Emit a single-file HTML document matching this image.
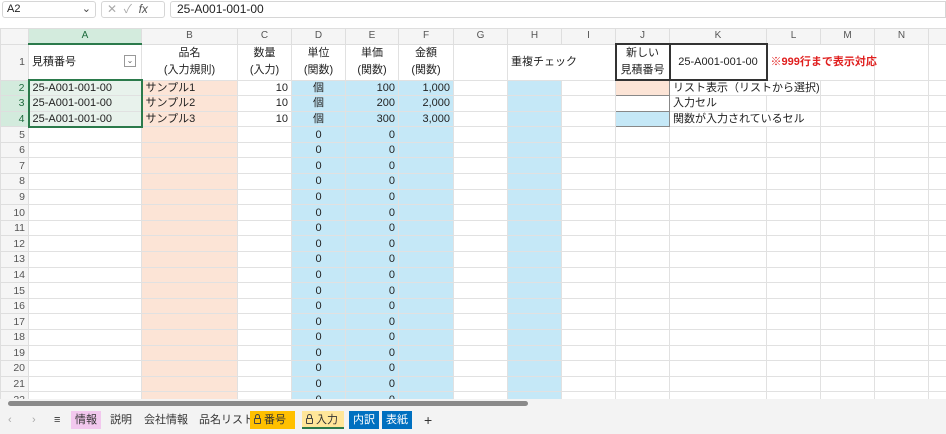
<!DOCTYPE html>
<html><head><meta charset="utf-8"><style>
*{box-sizing:border-box;margin:0;padding:0}
body{width:946px;height:434px;overflow:hidden;background:#fff;font-family:"Liberation Sans","Noto Sans CJK JP",sans-serif;font-size:11px;color:#222;position:relative}
.fb{position:absolute;top:0;left:0;width:946px;height:22px;background:#fff}
.nb{position:absolute;left:2px;top:1px;width:94px;height:17px;border:1px solid #d6d6d6;border-radius:3px;padding-left:4px;line-height:15px}
.fx{position:absolute;left:101px;top:1px;width:64px;height:17px;border:1px solid #d6d6d6;border-radius:3px;color:#aaa;line-height:15px;padding-left:5px;font-size:12px}
.fm{position:absolute;left:170px;top:1px;width:776px;height:17px;border:1px solid #d6d6d6;border-radius:3px 0 0 3px;line-height:15px;padding-left:6px;font-size:12px}
table{position:absolute;left:0;top:28px;border-collapse:collapse;table-layout:fixed;width:946px}
td{border:1px solid #e1e1e1;height:15.6px;padding:0 3px;white-space:nowrap;overflow:visible;line-height:14px}
tr.h td{height:15px;background:#f5f5f5;color:#555;text-align:center;font-size:10px;border-color:#dedede}
td.rh{background:#f5f5f5;color:#555;text-align:right;padding-right:3px;font-size:10.5px;border-color:#dedede}
.sel{background:#d3ebdd!important;color:#1e6b3d!important}
.p{background:#fce4d6}.b{background:#c5e8f7}
.r{text-align:right}.c{text-align:center}
.ov{position:relative;display:inline-block;white-space:nowrap}
.tabs{position:absolute;left:0;top:408px;width:946px;height:26px;background:#f3f3f3}
.tab{position:absolute;top:3px;height:18px;line-height:18px;padding:0 4px;font-size:11px;color:#333}
.sb{position:absolute;left:0;top:399px;width:946px;height:9px;background:#f3f3f3}
.lk{display:inline-block;width:7px;height:6px;border:1px solid #444;border-radius:1px;position:relative;margin-right:3px;vertical-align:-1px}
.lk:before{content:"";position:absolute;left:0;top:-5px;width:3px;height:4px;border:1px solid #444;border-bottom:none;border-radius:3px 3px 0 0}
</style></head><body>
<div class="fb"><div class="nb">A2<span style="position:absolute;right:4px;color:#444">⌄</span></div><div class="fx">✕ &nbsp;✓ &nbsp;<i style="color:#555">fx</i></div><div class="fm">25-A001-001-00</div></div>
<table>
<colgroup><col style="width:28px"><col style="width:113px"><col style="width:96px"><col style="width:54px"><col style="width:54px"><col style="width:53px"><col style="width:55px"><col style="width:54px"><col style="width:54px"><col style="width:54px"><col style="width:54px"><col style="width:97px"><col style="width:54px"><col style="width:54px"><col style="width:54px"><col style="width:18px"></colgroup>
<tr class="h"><td style="background:#f5f5f5"></td><td class="sel" style="border-bottom:2px solid #2b7a4b">A</td><td>B</td><td>C</td><td>D</td><td>E</td><td>F</td><td>G</td><td>H</td><td>I</td><td>J</td><td>K</td><td>L</td><td>M</td><td>N</td><td></td></tr>
<tr><td class="rh" style="height:34px">1</td><td>見積番号<span style="float:right;border:1px solid #999;width:12px;height:12px;font-size:8px;line-height:10px;text-align:center;color:#666;margin-right:2px">⌄</span></td><td class="c" style="line-height:17px">品名<br>(入力規則)</td><td class="c" style="line-height:17px">数量<br>(入力)</td><td class="c" style="line-height:17px">単位<br>(関数)</td><td class="c" style="line-height:17px">単価<br>(関数)</td><td class="c" style="line-height:17px">金額<br>(関数)</td><td></td><td style="border-right:none"><span class="ov">重複チェック</span></td><td style="border-left:none"></td><td class="c" style="border:2px solid #333;line-height:17px">新しい<br>見積番号</td><td class="c" style="border:2px solid #333">25-A001-001-00</td><td style="border-right:none"><span class="ov" style="color:#e0201f;font-weight:bold">※999行まで表示対応</span></td><td style="border-left:none"></td><td></td><td></td></tr>
<tr><td class="rh sel">2</td><td style="border:2px solid #2b7a4b;border-bottom:none;background:#e8f2ec">25-A001-001-00</td><td class="p">サンプル1</td><td class="r">10</td><td class="b c">個</td><td class="b r">100</td><td class="b r">1,000</td><td></td><td class="b"></td><td></td><td class="p" style="border:1px solid #888"></td><td style="border-right:none"><span class="ov">リスト表示（リストから選択)</span></td><td style="border-left:none"></td><td></td><td></td><td></td></tr>
<tr><td class="rh sel">3</td><td style="border-left:2px solid #2b7a4b;border-right:2px solid #2b7a4b;background:#e8f2ec">25-A001-001-00</td><td class="p">サンプル2</td><td class="r">10</td><td class="b c">個</td><td class="b r">200</td><td class="b r">2,000</td><td></td><td class="b"></td><td></td><td style="border:1px solid #888"></td><td>入力セル</td><td></td><td></td><td></td><td></td></tr>
<tr><td class="rh sel">4</td><td style="border:2px solid #2b7a4b;border-top:none;background:#e8f2ec">25-A001-001-00</td><td class="p">サンプル3</td><td class="r">10</td><td class="b c">個</td><td class="b r">300</td><td class="b r">3,000</td><td></td><td class="b"></td><td></td><td class="b" style="border:1px solid #888"></td><td style="border-right:none"><span class="ov">関数が入力されているセル</span></td><td style="border-left:none"></td><td></td><td></td><td></td></tr>
<tr><td class="rh">5</td><td></td><td class="p"></td><td></td><td class="b c">0</td><td class="b r">0</td><td class="b"></td><td></td><td class="b"></td><td></td><td></td><td></td><td></td><td></td><td></td><td></td></tr>
<tr><td class="rh">6</td><td></td><td class="p"></td><td></td><td class="b c">0</td><td class="b r">0</td><td class="b"></td><td></td><td class="b"></td><td></td><td></td><td></td><td></td><td></td><td></td><td></td></tr>
<tr><td class="rh">7</td><td></td><td class="p"></td><td></td><td class="b c">0</td><td class="b r">0</td><td class="b"></td><td></td><td class="b"></td><td></td><td></td><td></td><td></td><td></td><td></td><td></td></tr>
<tr><td class="rh">8</td><td></td><td class="p"></td><td></td><td class="b c">0</td><td class="b r">0</td><td class="b"></td><td></td><td class="b"></td><td></td><td></td><td></td><td></td><td></td><td></td><td></td></tr>
<tr><td class="rh">9</td><td></td><td class="p"></td><td></td><td class="b c">0</td><td class="b r">0</td><td class="b"></td><td></td><td class="b"></td><td></td><td></td><td></td><td></td><td></td><td></td><td></td></tr>
<tr><td class="rh">10</td><td></td><td class="p"></td><td></td><td class="b c">0</td><td class="b r">0</td><td class="b"></td><td></td><td class="b"></td><td></td><td></td><td></td><td></td><td></td><td></td><td></td></tr>
<tr><td class="rh">11</td><td></td><td class="p"></td><td></td><td class="b c">0</td><td class="b r">0</td><td class="b"></td><td></td><td class="b"></td><td></td><td></td><td></td><td></td><td></td><td></td><td></td></tr>
<tr><td class="rh">12</td><td></td><td class="p"></td><td></td><td class="b c">0</td><td class="b r">0</td><td class="b"></td><td></td><td class="b"></td><td></td><td></td><td></td><td></td><td></td><td></td><td></td></tr>
<tr><td class="rh">13</td><td></td><td class="p"></td><td></td><td class="b c">0</td><td class="b r">0</td><td class="b"></td><td></td><td class="b"></td><td></td><td></td><td></td><td></td><td></td><td></td><td></td></tr>
<tr><td class="rh">14</td><td></td><td class="p"></td><td></td><td class="b c">0</td><td class="b r">0</td><td class="b"></td><td></td><td class="b"></td><td></td><td></td><td></td><td></td><td></td><td></td><td></td></tr>
<tr><td class="rh">15</td><td></td><td class="p"></td><td></td><td class="b c">0</td><td class="b r">0</td><td class="b"></td><td></td><td class="b"></td><td></td><td></td><td></td><td></td><td></td><td></td><td></td></tr>
<tr><td class="rh">16</td><td></td><td class="p"></td><td></td><td class="b c">0</td><td class="b r">0</td><td class="b"></td><td></td><td class="b"></td><td></td><td></td><td></td><td></td><td></td><td></td><td></td></tr>
<tr><td class="rh">17</td><td></td><td class="p"></td><td></td><td class="b c">0</td><td class="b r">0</td><td class="b"></td><td></td><td class="b"></td><td></td><td></td><td></td><td></td><td></td><td></td><td></td></tr>
<tr><td class="rh">18</td><td></td><td class="p"></td><td></td><td class="b c">0</td><td class="b r">0</td><td class="b"></td><td></td><td class="b"></td><td></td><td></td><td></td><td></td><td></td><td></td><td></td></tr>
<tr><td class="rh">19</td><td></td><td class="p"></td><td></td><td class="b c">0</td><td class="b r">0</td><td class="b"></td><td></td><td class="b"></td><td></td><td></td><td></td><td></td><td></td><td></td><td></td></tr>
<tr><td class="rh">20</td><td></td><td class="p"></td><td></td><td class="b c">0</td><td class="b r">0</td><td class="b"></td><td></td><td class="b"></td><td></td><td></td><td></td><td></td><td></td><td></td><td></td></tr>
<tr><td class="rh">21</td><td></td><td class="p"></td><td></td><td class="b c">0</td><td class="b r">0</td><td class="b"></td><td></td><td class="b"></td><td></td><td></td><td></td><td></td><td></td><td></td><td></td></tr>
<tr><td class="rh">22</td><td></td><td class="p"></td><td></td><td class="b c">0</td><td class="b r">0</td><td class="b"></td><td></td><td class="b"></td><td></td><td></td><td></td><td></td><td></td><td></td><td></td></tr>
</table>
<div class="sb"><div style="position:absolute;left:8px;top:2px;width:520px;height:5px;border-radius:3px;background:#8a8a8a"></div></div>
<div class="tabs">
<span class="tab" style="left:4px;color:#aaa">‹</span><span class="tab" style="left:28px;color:#aaa">›</span><span class="tab" style="left:50px">≡</span>
<span class="tab" style="left:71px;background:#f2c8ee">情報</span>
<span class="tab" style="left:106px">説明</span>
<span class="tab" style="left:140px">会社情報</span>
<span class="tab" style="left:195px">品名リスト</span>
<span class="tab" style="left:250px;background:#ffc000;width:45px;padding-top:0"><span class="lk"></span>番号</span>
<span class="tab" style="left:302px;background:#ffe699;width:42px;border-bottom:2px solid #2b7a4b"><span class="lk"></span>入力</span>
<span class="tab" style="left:349px;background:#0070c0;color:#fff">内訳</span>
<span class="tab" style="left:382px;background:#0070c0;color:#fff">表紙</span>
<span class="tab" style="left:420px;font-size:14px">+</span>
</div>
</body></html>
